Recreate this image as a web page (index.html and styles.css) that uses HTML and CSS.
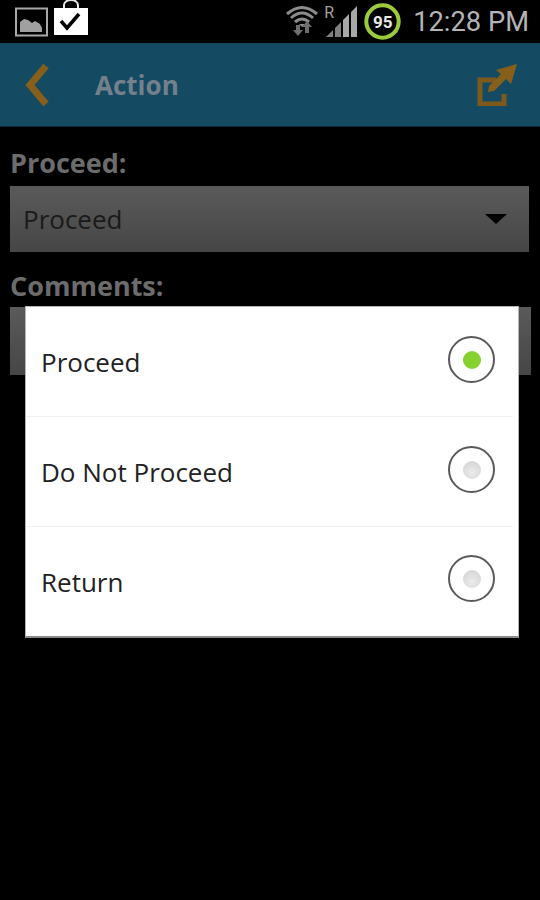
FILE: index.html
```html
<!DOCTYPE html>
<html lang="en">
<head>
<meta charset="utf-8">
<title>Action</title>
<link rel="stylesheet" href="styles.css">
</head>
<body>
<div class="screen">
  <div class="status">
    <svg class="ic-photo" width="34" height="30" viewBox="0 0 34 30"><rect x="1" y="1.5" width="31" height="27" fill="#000" stroke="#a8a8a8" stroke-width="2"/><path d="M5 25V15l4-3 4 1 4 3 3-2 5 3 2 4v4z" fill="#a0a0a0"/></svg>
    <svg class="ic-bag" width="36" height="38" viewBox="0 0 36 38"><path d="M11 9V6a7 5 0 0 1 14 0v3" fill="none" stroke="#e8e8e8" stroke-width="2"/><rect x="1" y="9" width="34" height="27" fill="#fff"/><path d="M8 22l6 7L26 15" fill="none" stroke="#000" stroke-width="3.5"/></svg>
    <div class="status-right">
      <svg class="ic-wifi" width="33" height="32" viewBox="0 0 33 32"><path d="M1 9Q16-4 31 9M5 13Q16 3 27 13M9 17q7-6 14 0" fill="none" stroke="#8c8c8c" stroke-width="3"/><path d="M13 19l3 3 3-3z" fill="#8c8c8c"/><path d="M10 20v5H7l5 6 5-6h-3v-5zM21 16l-5 6h3v6h4v-6h3z" fill="#6e6e6e"/></svg>
      <span class="roaming">R</span>
      <svg class="ic-signal" width="33" height="31" viewBox="0 0 33 31"><path d="M0 31L7 24V31zM9 31V22l6-6V31z" fill="#808080"/><path d="M17 31V14l6-6V31zM25 31V6l6-6V31z" fill="#a8a8a8"/></svg>
      <svg class="ic-battery" width="37" height="37" viewBox="0 0 37 37"><circle cx="18.5" cy="18.5" r="16.2" fill="#000" stroke="#9ccb3b" stroke-width="4"/></svg>
      <span class="battery-num">95</span>
      <span class="clock">12:28 PM</span>
    </div>
  </div>
  <div class="appbar">
    <svg class="ic-back" width="26" height="42" viewBox="0 0 26 42"><path d="M22 2L6 21l16 19" fill="none" stroke="#86601a" stroke-width="7"/></svg>
    <span class="appbar-title">Action</span>
    <svg class="ic-share" width="42" height="42" viewBox="0 0 42 42"><path d="M20 16H4v24h24V30" fill="none" stroke="#7d5a1c" stroke-width="5"/><path d="M41 0L20 6l5 4-12 12-1 6 6-1 12-12 5 5z" fill="#86601a"/></svg>
  </div>
  <main class="form">
    <div class="label">Proceed:</div>
    <div class="spinner">
      <span>Proceed</span>
      <span class="caret"></span>
    </div>
    <div class="label label-comments">Comments:</div>
    <div class="textbox"></div>
  </main>
  <div class="dialog">
    <div class="option">
      <span>Proceed</span>
      <span class="radio"><span class="dot dot-on"></span></span>
    </div>
    <div class="option">
      <span>Do Not Proceed</span>
      <span class="radio"><span class="dot"></span></span>
    </div>
    <div class="option">
      <span>Return</span>
      <span class="radio"><span class="dot"></span></span>
    </div>
  </div>
</div>
</body>
</html>
```
FILE: styles.css
```css
html, body {
  margin: 0;
  padding: 0;
  background: #000;
}
.screen {
  position: relative;
  width: 540px;
  height: 900px;
  overflow: hidden;
  background: #000;
  font-family: "Open Sans", Roboto, "Liberation Sans", sans-serif;
}
.status {
  height: 43px;
  display: flex;
  align-items: flex-start;
  padding-left: 15px;
  box-sizing: border-box;
  position: relative;
}
.ic-photo { margin-top: 7px; }
.ic-bag { margin-left: 4px; margin-top: -1px; }
.status-right {
  margin-left: auto;
  display: flex;
  align-items: flex-start;
  padding-right: 11px;
  font-family: Roboto, "Liberation Sans", sans-serif;
}
.ic-wifi { margin-top: 5px; }
.roaming {
  color: #a0a0a0;
  font-size: 16px;
  line-height: 18px;
  margin-left: 5px;
  margin-top: 4px;
  width: 9px;
}
.ic-signal { margin-top: 6px; margin-left: -7px; }
.ic-battery { margin-top: 3px; margin-left: 5px; }
.battery-num {
  color: #e8e8e8;
  font-size: 17px;
  font-weight: 700;
  line-height: 20px;
  width: 37px;
  margin-left: -37px;
  margin-top: 12px;
  text-align: center;
}
.clock {
  color: #b4b4b4;
  font-size: 27.3px;
  line-height: 30px;
  margin-left: 12px;
  margin-top: 7px;
  white-space: nowrap;
}
.appbar {
  height: 84px;
  background: #144a62;
  display: flex;
  align-items: center;
  padding: 0 22px 0 24px;
  border-bottom: 1px solid #0c2e3d;
  box-sizing: border-box;
}
.appbar-title {
  color: #74808c;
  font-size: 26px;
  font-weight: 700;
  margin-left: 45px;
}
.ic-share { margin-left: auto; }
.form {
  padding: 18px 11px 0 10px;
  height: 248px;
  box-sizing: border-box;
  position: relative;
}
.label {
  color: #6c6c6c;
  font-size: 27px;
  font-weight: 700;
  line-height: 35px;
}
.label-comments { margin-top: 16px; }
.spinner {
  margin-top: 6px;
  height: 66px;
  background: linear-gradient(#5a5a5a, #464646);
  display: flex;
  align-items: center;
  justify-content: space-between;
  color: #1a1a1a;
  font-size: 26px;
  padding: 0 22px 0 13px;
  box-sizing: border-box;
}
.caret {
  width: 0;
  height: 0;
  border-left: 11px solid transparent;
  border-right: 11px solid transparent;
  border-top: 10px solid #000;
}
.textbox {
  margin: 4px -2px 0 0;
  height: 68px;
  background: linear-gradient(#5a5a5a, #464646);
}
.dialog {
  position: absolute;
  left: 25px;
  top: 306px;
  width: 494px;
  height: 332px;
  box-sizing: border-box;
  background: #fff;
  border: 1px solid #b5b5b5;
  border-bottom: 2px solid #8a8a8a;
  display: flex;
  flex-direction: column;
}
.option {
  flex: 1;
  display: flex;
  align-items: center;
  justify-content: space-between;
  padding: 0 18px 0 15px;
  color: #222;
  font-size: 26px;
  border-bottom: 1px solid #f0f0f0;
  margin-right: 5px;
}
.option:last-child { border-bottom: 0; }
.radio {
  width: 47px;
  height: 47px;
  box-sizing: border-box;
  border: 2px solid #5a5a5a;
  border-radius: 50%;
  display: flex;
  align-items: center;
  justify-content: center;
  margin-top: -4px;
}
.option:last-child .radio { margin-top: -6px; }
.dot {
  width: 18px;
  height: 18px;
  border-radius: 50%;
  background: radial-gradient(circle at 50% 65%, #ececec, #cfcfcf);
}
.dot-on { background: #85d22f; }
```
